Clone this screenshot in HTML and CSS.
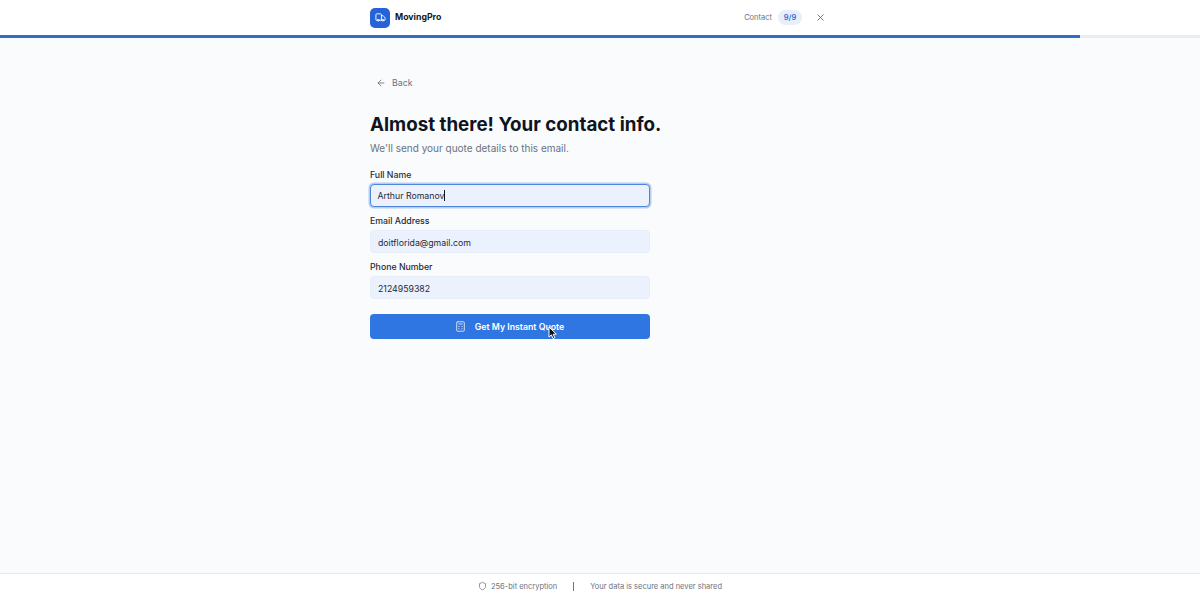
FILE: index.html
```html
<!doctype html>
<html lang="en">
<head>
    <meta charset="UTF-8" />
    <meta name="viewport" content="width=device-width, initial-scale=1.0" />
    <title>MovingPro</title>
    <link rel="stylesheet" href="styles.css">
</head>
<body>
    <header class="topbar">
        <div class="topbar-inner">
            <div class="brand">
                <span class="brand-icon">
                    <svg width="11" height="11" viewBox="0 0 24 24" fill="none" stroke="#fff" stroke-width="2" stroke-linecap="round" stroke-linejoin="round">
                        <path d="M14 18V6a2 2 0 0 0-2-2H4a2 2 0 0 0-2 2v11a1 1 0 0 0 1 1h2"/>
                        <path d="M15 18H9"/>
                        <path d="M19 18h2a1 1 0 0 0 1-1v-3.65a1 1 0 0 0-.22-.62l-3.48-4.35A1 1 0 0 0 17.52 8H14"/>
                        <circle cx="17" cy="18" r="2"/>
                        <circle cx="7" cy="18" r="2"/>
                    </svg>
                </span>
                <span class="brand-name">MovingPro</span>
            </div>
            <div class="step">
                <span class="step-label">Contact</span>
                <span class="step-badge">9/9</span>
                <button class="close-btn" aria-label="Close">
                    <svg width="11" height="11" viewBox="0 0 24 24" fill="none" stroke="#6b7280" stroke-width="2" stroke-linecap="round">
                        <path d="M18 6 6 18"/>
                        <path d="m6 6 12 12"/>
                    </svg>
                </button>
            </div>
        </div>
    </header>
    <div class="progress"><div class="progress-fill"></div></div>

    <main class="content">
        <a class="back" href="#">
            <svg width="10" height="10" viewBox="0 0 24 24" fill="none" stroke="#6b7280" stroke-width="2" stroke-linecap="round" stroke-linejoin="round">
                <path d="m12 19-7-7 7-7"/>
                <path d="M19 12H5"/>
            </svg>
            Back
        </a>
        <h1>Almost there! Your contact info.</h1>
        <p class="subtitle">We'll send your quote details to this email.</p>

        <form class="form">
            <div class="field">
                <label>Full Name</label>
                <div class="input input-focus">Arthur Romanov<span class="caret"></span></div>
            </div>
            <div class="field">
                <label>Email Address</label>
                <div class="input">doitflorida@gmail.com</div>
            </div>
            <div class="field">
                <label>Phone Number</label>
                <div class="input">2124959382</div>
            </div>
            <button class="submit" type="button">
                <svg width="9" height="11" viewBox="0 0 20 24" fill="none" stroke="#dbe7fb" stroke-width="2" stroke-linecap="round" stroke-linejoin="round">
                    <rect x="1.5" y="1.5" width="17" height="21" rx="2"/>
                    <path d="M6 6.5h8"/>
                    <path d="M6 12h1"/>
                    <path d="M13 12h1"/>
                    <path d="M6 17h1"/>
                    <path d="M13 17h1"/>
                </svg>
                <span class="submit-label">Get My Instant Quote</span>
                <svg class="pointer" width="10" height="14" viewBox="0 0 10 14">
                    <path d="M1 1v10l2.4-2.2L5 12.6l1.8-.8-1.6-3.6h3.2z" fill="#111" stroke="#fff" stroke-width="1"/>
                </svg>
            </button>
        </form>
    </main>

    <footer class="footer">
        <span class="footer-item">
            <svg width="9" height="10" viewBox="0 0 24 24" fill="none" stroke="#6b7280" stroke-width="2" stroke-linejoin="round">
                <path d="M20 13c0 5-3.5 7.5-7.66 8.95a1 1 0 0 1-.67-.01C7.5 20.5 4 18 4 13V6a1 1 0 0 1 1-1c2 0 4.5-1.2 6.24-2.72a1.17 1.17 0 0 1 1.52 0C14.51 3.81 17 5 19 5a1 1 0 0 1 1 1z"/>
            </svg>
            256-bit encryption
        </span>
        <span class="footer-sep"></span>
        <span class="footer-item">Your data is secure and never shared</span>
    </footer>
</body>
</html>
```

FILE: styles.css
```css
* {
    box-sizing: border-box;
}

html,
body {
    height: 100%;
}

body {
    margin: 0;
    font-family: 'Inter', sans-serif;
    background-color: #f9fbfd;
    color: #111827;
    display: flex;
    flex-direction: column;
    overflow: hidden;
}

.topbar {
    height: 35px;
    background-color: #ffffff;
    flex-shrink: 0;
}

.topbar-inner {
    width: 460px;
    height: 100%;
    margin-left: 370px;
    display: flex;
    align-items: center;
    justify-content: space-between;
}

.brand {
    display: flex;
    align-items: center;
    gap: 5px;
}

.brand-icon {
    width: 20px;
    height: 20px;
    border-radius: 5px;
    background-color: #2563d9;
    display: flex;
    align-items: center;
    justify-content: center;
}

.brand-name {
    font-size: 8.75px;
    font-weight: 700;
    line-height: 12px;
    margin-top: -1px;
    color: #111827;
}

.step {
    display: flex;
    align-items: center;
    gap: 5px;
}

.step-label {
    font-size: 7.5px;
    margin-right: 1px;
    color: #6b7280;
}

.step-badge {
    width: 24px;
    height: 15px;
    border-radius: 8px;
    background-color: #e8effb;
    color: #2f6fd6;
    font-size: 7.5px;
    font-weight: 600;
    display: flex;
    align-items: center;
    justify-content: center;
}

.close-btn {
    width: 11px;
    height: 11px;
    margin: 0 4px 0 8px;
    padding: 0;
    border: none;
    background: none;
    display: flex;
}

.progress {
    height: 3px;
    background-color: #ececec;
    flex-shrink: 0;
}

.progress-fill {
    width: 90%;
    height: 100%;
    background-color: #2f6fc4;
}

.content {
    flex: 1;
    width: 280px;
    margin-left: 370px;
    padding-top: 39px;
}

.back {
    display: flex;
    align-items: center;
    gap: 6px;
    width: fit-content;
    margin-left: 6px;
    height: 12px;
    font-size: 8.75px;
    line-height: 12px;
    color: #6b7280;
    text-decoration: none;
}

h1 {
    margin: 22px 0 0;
    font-size: 18.75px;
    line-height: 28px;
    font-weight: 700;
    color: #0f1420;
    white-space: nowrap;
}

.subtitle {
    margin: 1px 0 0;
    font-size: 10px;
    line-height: 16px;
    color: #6b7280;
}

.form {
    margin-top: 12.5px;
    display: flex;
    flex-direction: column;
    gap: 7.5px;
}

.field label {
    display: block;
    font-size: 8.75px;
    line-height: 12px;
    font-weight: 500;
    color: #1f2937;
    margin-bottom: 3.5px;
}

.input {
    height: 23px;
    padding: 1.5px 7px 0;
    border-radius: 4px;
    background-color: #ecf2fd;
    border: 1px solid #e8eef8;
    font-size: 8.75px;
    line-height: 21px;
    color: #1f2937;
}

.input-focus {
    border: 1.5px solid #4f86d9;
    box-shadow: 0 0 0 1.5px #b4cdf1;
    padding: 1px 6.5px 0;
    line-height: 20px;
}

.caret {
    display: inline-block;
    width: 1px;
    height: 11px;
    background-color: #111827;
    vertical-align: -2px;
}

.submit {
    position: relative;
    height: 25px;
    margin-top: 7px;
    border: none;
    border-radius: 4px;
    background-color: #2f76e3;
    color: #ffffff;
    font-family: inherit;
    font-size: 8.75px;
    font-weight: 600;
    display: flex;
    align-items: center;
    justify-content: center;
    gap: 10px;
}

.submit-label {
    line-height: 12px;
    margin-top: 1px;
}

.pointer {
    position: absolute;
    left: 178px;
    top: 12px;
}

.footer {
    height: 26px;
    flex-shrink: 0;
    padding-bottom: 1px;
    background-color: #ffffff;
    border-top: 1px solid #e5e9ef;
    display: flex;
    align-items: center;
    justify-content: center;
    gap: 16px;
    font-size: 7.5px;
    color: #6b7280;
}

.footer-item {
    display: flex;
    align-items: center;
    gap: 4px;
}

.footer-sep {
    width: 1px;
    height: 9px;
    background-color: #6b7280;
}
```
